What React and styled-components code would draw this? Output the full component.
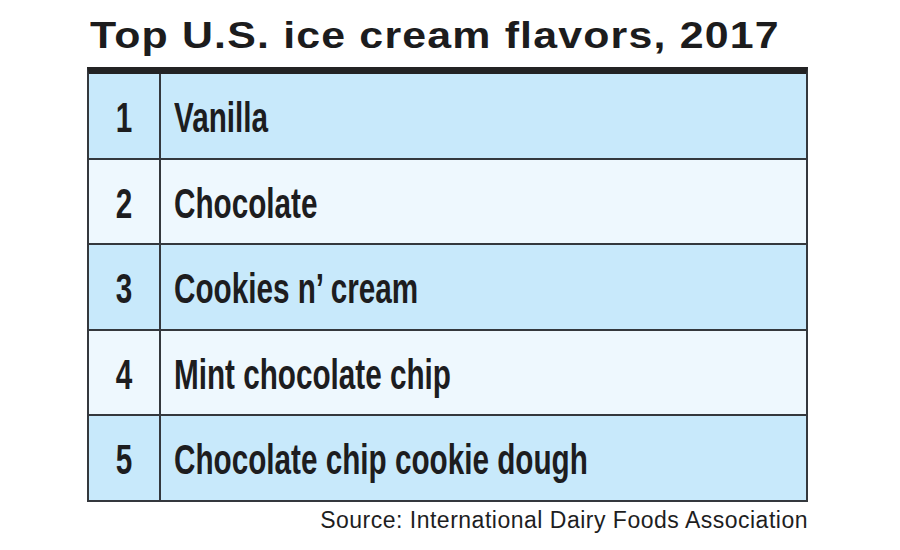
import React from 'react';
import styled, { createGlobalStyle } from 'styled-components';

const GlobalStyle = createGlobalStyle`
  html, body {
    margin: 0;
    padding: 0;
    background: #ffffff;
  }
`;

const flavors = [
  'Vanilla',
  'Chocolate',
  'Cookies n\u2019 cream',
  'Mint chocolate chip',
  'Chocolate chip cookie dough',
];

const App = () => {
  return (
    <Page>
      <GlobalStyle />
      <Chart>
        <Title>Top U.S. ice cream flavors, 2017</Title>
        <Table>
          {flavors.map((name, i) => (
            <Row key={name} shaded={i % 2 === 0}>
              <RankCell>
                <Condensed center>{i + 1}</Condensed>
              </RankCell>
              <NameCell>
                <Condensed>{name}</Condensed>
              </NameCell>
            </Row>
          ))}
        </Table>
        <Source>Source: International Dairy Foods Association</Source>
      </Chart>
    </Page>
  );
};

const Page = styled.div`
  width: 900px;
  height: 550px;
  box-sizing: border-box;
  padding-left: 87px;
  background: #ffffff;
  display: flex;
  font-family: 'Liberation Sans', Arial, sans-serif;
  color: #1e1e1f;
  overflow: hidden;
`;

const Chart = styled.div`
  width: 721px;
  display: flex;
  flex-direction: column;
  padding-top: 14px;
`;

const Title = styled.h1`
  margin: 0 0 0 3px;
  height: 53px;
  font-size: 36px;
  font-weight: 700;
  letter-spacing: 1px;
  line-height: 44px;
  white-space: nowrap;
  transform: scaleX(1.19);
  transform-origin: left center;
  color: #1c1c1d;
`;

const Table = styled.div`
  border-top: 7px solid #232324;
  border-left: 2px solid #34383d;
  border-right: 2px solid #34383d;
  display: flex;
  flex-direction: column;
`;

const Row = styled.div`
  display: grid;
  grid-template-columns: 72px 1fr;
  height: ${p => (p.shaded ? 84 : 83)}px;
  border-bottom: 2px solid #34383d;
  background: ${p => (p.shaded ? '#c8e9fb' : '#eef8fe')};
`;

const RankCell = styled.div`
  display: flex;
  align-items: center;
  justify-content: center;
  border-right: 2px solid #34383d;
`;

const NameCell = styled.div`
  display: flex;
  align-items: center;
  padding-left: 13px;
`;

const Condensed = styled.span`
  display: inline-block;
  font-size: 43px;
  font-weight: 700;
  line-height: 1;
  white-space: nowrap;
  transform: scaleX(0.69);
  transform-origin: ${p => (p.center ? 'center' : 'left')} center;
  color: #1d1d1f;
  padding-top: 3px;
`;

const Source = styled.div`
  align-self: flex-end;
  margin-top: 5px;
  font-size: 23px;
  letter-spacing: 0.5px;
  line-height: 26px;
  color: #1e1e1f;
`;

export default App;
